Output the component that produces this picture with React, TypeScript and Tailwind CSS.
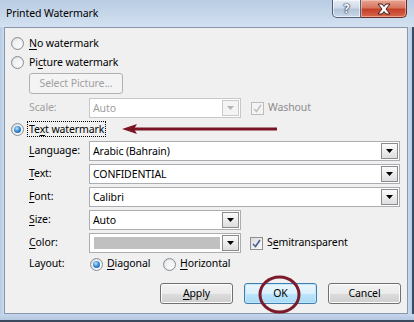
import React from "react";

const Radio = ({ checked = false }: { checked?: boolean }) => (
    <span className="w-[13px] h-[13px] shrink-0 rounded-full border border-[#8a8f95] bg-[linear-gradient(135deg,#d4d6d9,#f7f8f9)] flex items-center justify-center">
        <span className="w-[9px] h-[9px] rounded-full bg-[linear-gradient(135deg,#e9ebee,#fdfdfd)] flex items-center justify-center">
            {checked && (
                <span className="w-[7px] h-[7px] rounded-full bg-[radial-gradient(circle_at_40%_35%,#bfe6ff_0%,#3a8fd6_45%,#124d86_100%)]" />
            )}
        </span>
    </span>
);

const Checkbox = ({ disabled = false }: { disabled?: boolean }) => (
    <span
        className={
            disabled
                ? "w-[13px] h-[13px] shrink-0 border border-[#bcbcbc] bg-[#f4f4f4] flex items-center justify-center"
                : "w-[13px] h-[13px] shrink-0 border border-[#8e8f8f] bg-[linear-gradient(135deg,#dcdcdc,#fbfbfb)] flex items-center justify-center"
        }
    >
        <svg width="9" height="9" viewBox="0 0 9 9">
            <path
                d="M1 5 L3.5 7.5 L8 1"
                fill="none"
                stroke={disabled ? "#c2c2c2" : "#4a5f97"}
                strokeWidth="1.6"
            />
        </svg>
    </span>
);

const DropButton = ({ disabled = false }: { disabled?: boolean }) => (
    <span
        className={
            disabled
                ? "w-[17px] h-full shrink-0 border border-[#c9c9c9] bg-[#f4f4f4] flex items-center justify-center"
                : "w-[17px] h-full shrink-0 border border-[#8c8c8c] bg-[linear-gradient(to_bottom,#fbfbfb,#dedede)] flex items-center justify-center"
        }
    >
        <svg width="7" height="4" viewBox="0 0 7 4">
            <path d="M0 0 H7 L3.5 4 Z" fill={disabled ? "#b5b5b5" : "#000"} />
        </svg>
    </span>
);

const Combo = ({
    value,
    width,
    disabled = false,
    swatch = false,
}: {
    value?: string;
    width: string;
    disabled?: boolean;
    swatch?: boolean;
}) => (
    <div
        className={`${width} h-[20px] border ${disabled ? "border-[#c6c9cc]" : "border-[#abadb3]"} bg-white flex items-stretch p-[1px]`}
    >
        {swatch ? (
            <span className="flex-1 my-[2px] ml-[3px] mr-[2px] bg-[#c0c0c0]" />
        ) : (
            <span className={`flex-1 pl-[2px] leading-[16px] ${disabled ? "text-[#a0a0a0]" : "text-black"}`}>{value}</span>
        )}
        <DropButton disabled={disabled} />
    </div>
);

const Btn = ({ children, primary = false }: { children: React.ReactNode; primary?: boolean }) => (
    <div
        className={
            primary
                ? "w-[73px] h-[21px] rounded-[3px] border border-[#3c7fb1] bg-[linear-gradient(to_bottom,#eaf6fd_0%,#d9f0fc_50%,#bee6fd_50%,#a7d9f5_100%)] shadow-[inset_0_0_0_1px_#c5e6f8] flex items-center justify-center"
                : "w-[73px] h-[21px] rounded-[3px] border border-[#707070] bg-[linear-gradient(to_bottom,#f2f2f2_0%,#ebebeb_50%,#dddddd_50%,#cfcfcf_100%)] shadow-[inset_0_0_0_1px_#fcfcfc] flex items-center justify-center"
        }
    >
        <span>{children}</span>
    </div>
);

const U = ({ children }: { children: React.ReactNode }) => <span className="underline underline-offset-[2px]">{children}</span>;

export default function App() {
    return (
        <div className="w-[414px] h-[322px] relative overflow-hidden bg-[#c8d9ed] flex flex-col font-['Segoe_UI','Noto_Sans',sans-serif] text-[10.5px] tracking-[-0.1px] text-black">
            {/* title bar */}
            <div className="h-[27px] shrink-0 flex justify-between bg-[linear-gradient(to_bottom,#b9cce3,#d3e1f1)]">
                <div className="pl-[6px] pt-[5px] leading-[16px] text-[10.5px]">Printed Watermark</div>
                <div className="flex h-[18px] pr-[7px]">
                    <div className="w-[29px] h-full border border-[#4f5f78] border-t-0 rounded-bl-[5px] bg-[linear-gradient(to_bottom,#e6edf5_0%,#cfdbe9_45%,#b3c4da_55%,#c9d8ea_100%)] shadow-[inset_0_0_0_1px_rgba(255,255,255,0.6)] flex items-center justify-center">
                        <span className="text-white font-bold text-[12px] leading-none [text-shadow:0_0_1px_#1f3350,0_0_1px_#1f3350,0_0_2px_#1f3350]">?</span>
                    </div>
                    <div className="w-[46px] h-full border border-[#6b2a24] border-t-0 border-l-0 rounded-br-[5px] bg-[linear-gradient(to_bottom,#e8a493_0%,#d9775f_45%,#c3402a_55%,#d7674a_100%)] shadow-[inset_0_0_0_1px_rgba(255,220,210,0.5)] flex items-center justify-center">
                        <svg width="16" height="12" viewBox="0 0 16 12">
                            <path
                                d="M2 1 H6 L8 3.5 L10 1 H14 L10 6 L14 11 H10 L8 8.5 L6 11 H2 L6 6 Z"
                                fill="#fff"
                                stroke="#3f1a18"
                                strokeWidth="1"
                                strokeLinejoin="round"
                            />
                        </svg>
                    </div>
                </div>
            </div>

            <div className="flex h-[287px] shrink-0">
                <div className="w-[4px] bg-[linear-gradient(to_right,#b5cae3,#cddcee)]" />
                {/* client area */}
                <div className="w-[404px] h-full border border-[#8797ad] bg-[#f0f0f0] flex flex-col">
                    <div className="mt-[6px] h-[19px] ml-[6px] flex items-center gap-[4px]">
                        <Radio />
                        <span className="ml-[1px]"><U>N</U>o watermark</span>
                    </div>
                    <div className="h-[19px] ml-[6px] flex items-center gap-[4px]">
                        <Radio />
                        <span className="ml-[1px]">Pi<U>c</U>ture watermark</span>
                    </div>
                    <div className="mt-[1px] ml-[24px] w-[94px] h-[21px] rounded-[3px] border border-[#adb2b5] bg-[#f4f4f4] text-[#a0a0a0] flex items-center justify-center">
                        Select Picture...
                    </div>
                    <div className="mt-[4px] h-[20px] ml-[24px] flex items-center">
                        <span className="w-[60px] text-[#a0a0a0]">Scale:</span>
                        <Combo value="Auto" width="w-[152px]" disabled />
                        <span className="ml-[10px] flex items-center gap-[4px] text-[#8d8d8d]">
                            <Checkbox disabled />
                            <span>Washout</span>
                        </span>
                    </div>
                    <div className="mt-[3px] h-[16px] ml-[6px] flex items-center gap-[3px]">
                        <Radio checked />
                        <span className="border border-dotted border-black px-[1px] leading-[14px]">
                            Te<U>x</U>t watermark
                        </span>
                    </div>
                    <div className="mt-[4px] h-[20px] ml-[24px] flex items-center">
                        <span className="w-[60px]"><U>L</U>anguage:</span>
                        <Combo value="Arabic (Bahrain)" width="w-[311px]" />
                    </div>
                    <div className="mt-[3px] h-[20px] ml-[24px] flex items-center">
                        <span className="w-[60px]"><U>T</U>ext:</span>
                        <Combo value="CONFIDENTIAL" width="w-[311px]" />
                    </div>
                    <div className="mt-[3px] h-[20px] ml-[24px] flex items-center">
                        <span className="w-[60px]"><U>F</U>ont:</span>
                        <Combo value="Calibri" width="w-[311px]" />
                    </div>
                    <div className="mt-[3px] h-[20px] ml-[24px] flex items-center">
                        <span className="w-[60px]"><U>S</U>ize:</span>
                        <Combo value="Auto" width="w-[152px]" />
                    </div>
                    <div className="mt-[3px] h-[20px] ml-[24px] flex items-center">
                        <span className="w-[60px]"><U>C</U>olor:</span>
                        <Combo width="w-[152px]" swatch />
                        <span className="ml-[9px] flex items-center gap-[4px]">
                            <Checkbox />
                            <span>S<U>e</U>mitransparent</span>
                        </span>
                    </div>
                    <div className="mt-[3px] h-[16px] ml-[24px] flex items-center">
                        <span className="w-[61px]">Layout:</span>
                        <Radio checked />
                        <span className="ml-[4px] w-[56px]"><U>D</U>iagonal</span>
                        <Radio />
                        <span className="ml-[4px]"><U>H</U>orizontal</span>
                    </div>
                    <div className="mt-[11px] h-[21px] pr-[6px] flex justify-end gap-[11px]">
                        <Btn><U>A</U>pply</Btn>
                        <Btn primary>OK</Btn>
                        <Btn>Cancel</Btn>
                    </div>
                </div>
                <div className="flex-1 flex">
                    <div className="flex-1 bg-[linear-gradient(to_right,#cbdbee,#b8cce4)]" />
                    <div className="w-[2px] bg-[#3b4a5e]" />
                </div>
            </div>
            <div className="flex-1 flex flex-col">
                <div className="flex-1 bg-[linear-gradient(to_bottom,#c6d7ec,#b4c8e1)]" />
                <div className="h-[2px] bg-[#3b4a5e]" />
            </div>

            {/* annotations drawn over the dialog */}
            <svg className="absolute left-0 top-0 pointer-events-none" width="414" height="322" viewBox="0 0 414 322">
                <path d="M122 129 L137 124 L134 129 L137 134 Z" fill="#7b1525" />
                <line x1="133" y1="129" x2="277" y2="129" stroke="#7b1525" strokeWidth="3" />
                <ellipse cx="279.5" cy="294.5" rx="19.5" ry="17.5" fill="none" stroke="#7b1a2a" strokeWidth="3" />
            </svg>
        </div>
    );
}
